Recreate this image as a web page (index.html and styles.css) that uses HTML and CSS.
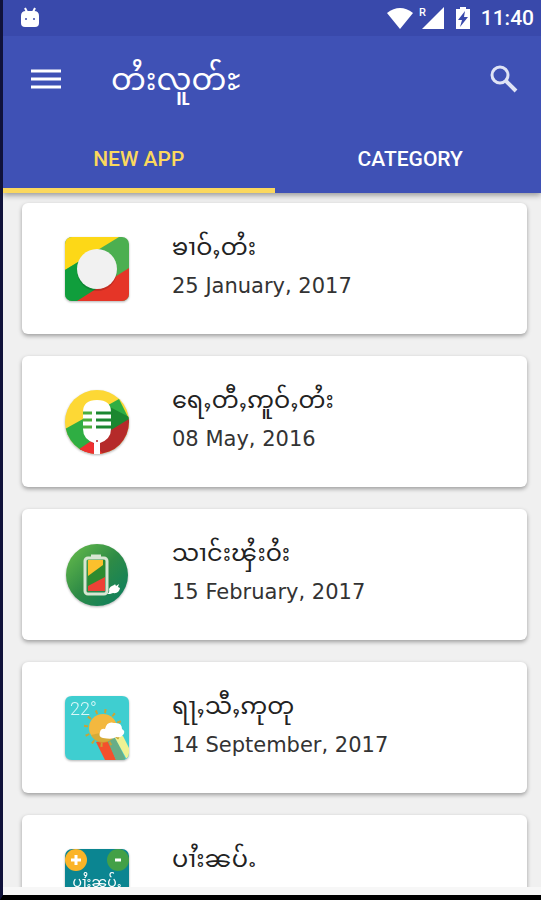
FILE: index.html
```html
<!DOCTYPE html>
<html lang="shn">
<head>
  <meta charset="UTF-8" />
  <meta name="viewport" content="width=device-width, initial-scale=1.0" />
  <title>တႆးလူတ်ႊ</title>
  <link rel="stylesheet" href="styles.css">
</head>
<body>

<header>
  <div class="status-bar">
    <svg class="robot" width="20" height="22" viewBox="0 0 20 22">
      <path d="M5 1l2 4M15 1l-2 4" stroke="#fff" stroke-width="2"/>
      <path d="M1 9q0-5 5-5h8q5 0 5 5v7q0 4-4 4H5q-4 0-4-4z" fill="#fff"/>
      <circle cx="6" cy="12" r="1" fill="#3949ab"/>
      <circle cx="14" cy="12" r="1" fill="#3949ab"/>
    </svg>
    <div class="status-icons">
      <svg width="28" height="22" viewBox="0 0 28 22">
        <path d="M1 6Q14-4 27 6L14 22z" fill="#fff"/>
      </svg>
      <svg width="26" height="22" viewBox="0 0 26 22">
        <text x="0" y="9" class="roaming">R</text>
        <path d="M25 0v22H3z" fill="#fff"/>
      </svg>
      <svg class="battery" width="16" height="22" viewBox="0 0 16 22">
        <path d="M1 2h4V0h6v2h4v20H1z" fill="#fff"/>
        <path d="M10 4L3 13h4l-2 7 8-10H9z" fill="#3949ab"/>
      </svg>
      <span class="clock">11:40</span>
    </div>
  </div>

  <div class="toolbar">
    <button aria-label="Menu">
      <svg width="30" height="22" viewBox="0 0 30 22">
        <path d="M0 3h30M0 11h30M0 19h30" stroke="#fff" stroke-width="3"/>
      </svg>
    </button>
    <h1>တႆးလူတ်ႊ</h1>
    <button aria-label="Search">
      <svg width="28" height="28" viewBox="0 0 28 28" fill="none" stroke="#dfe3f5">
        <circle cx="10" cy="10" r="8" stroke-width="3"/>
        <path d="M16 16l10 10" stroke-width="4"/>
      </svg>
    </button>
  </div>

  <nav class="tabs">
    <button class="tab active">NEW APP</button>
    <button class="tab">CATEGORY</button>
  </nav>
</header>

<main>
  <article class="card">
    <svg class="icon" viewBox="0 0 64 64">
      <clipPath id="square"><rect width="64" height="64" rx="7"/></clipPath>
      <g clip-path="url(#square)">
        <path d="M0 0h64v64H0z" fill="#4caf50"/>
        <path d="M0 0h54L0 33z" fill="#fdd817"/>
        <path d="M0 33L28 16l8 36-22 12H0z" fill="#109e3c"/>
        <path d="M12 64L64 31v33z" fill="#e53527"/>
      </g>
      <circle cx="32" cy="34" r="20" fill="#000" opacity=".15"/>
      <circle cx="32" cy="32" r="20" fill="#f1f1f1"/>
    </svg>
    <div class="info">
      <h2>ၶၢဝ်ႇတႆး</h2>
      <time datetime="2017-01-25">25 January, 2017</time>
    </div>
  </article>

  <article class="card">
    <svg class="icon" viewBox="0 0 64 64">
      <clipPath id="round"><circle cx="32" cy="32" r="32"/></clipPath>
      <g clip-path="url(#round)">
        <path d="M0 0h64v64H0z" fill="#fdd835"/>
        <path d="M0 39L54 9l10 20L14 62 0 64z" fill="#2fae43"/>
        <path d="M43 16L64 27v5L38 47z" fill="#1b8730"/>
        <path d="M10 62L64 29v35H10z" fill="#b52a2a"/>
        <path d="M10 62l16-11 12 13H10z" fill="#ee3030"/>
      </g>
      <path d="M18 22q0-12 14-12t14 12v17q0 10-11 14v11h-6V53q-11-4-11-14z" fill="#fff"/>
      <path d="M18 23h9M18 30h9M18 37h9" stroke="#4cae3c" stroke-width="3"/>
      <path d="M31 23h15M31 30h15M31 37h15" stroke="#1b8730" stroke-width="3"/>
      <circle cx="32" cy="51" r="1" fill="#b52a2a"/>
    </svg>
    <div class="info">
      <h2>ရေႇတီႇဢူဝ်ႇတႆး</h2>
      <time datetime="2016-05-08">08 May, 2016</time>
    </div>
  </article>

  <article class="card">
    <svg class="icon" viewBox="0 0 64 64">
      <linearGradient id="leaf" x1="0" y1="0" x2="1" y2="1">
        <stop offset="0" stop-color="#6abf4b"/>
        <stop offset=".5" stop-color="#2e8b46"/>
        <stop offset="1" stop-color="#087d62"/>
      </linearGradient>
      <circle cx="32" cy="32" r="31" fill="url(#leaf)"/>
      <path d="M23 17h17v31H23z" fill="#2e8b2f"/>
      <path d="M23 17h15v5L23 33z" fill="#fbc02d"/>
      <path d="M23 43l17-9v14H23z" fill="#ee4136"/>
      <rect x="20" y="15" width="22" height="36" rx="3" fill="none" stroke="#d7e6d2" stroke-width="3"/>
      <path d="M26 13h10" stroke="#d7e6d2" stroke-width="3"/>
      <path d="M42 51q3-1 2-5c2-4 5-3 6-5l1 2 3-2-1 3 2 1q-1 6-7 5l-3 1" fill="#fff"/>
    </svg>
    <div class="info">
      <h2>သၢင်းၾႆးဝႆး</h2>
      <time datetime="2017-02-15">15 February, 2017</time>
    </div>
  </article>

  <article class="card">
    <svg class="icon" viewBox="0 0 64 64">
      <path d="M7 0h50q7 0 7 7v50q0 7-7 7H7q-7 0-7-7V7q0-7 7-7z" fill="#3fced0"/>
      <g clip-path="url(#square)">
        <path d="M31 46l12-2 8 20H40z" fill="#f4512c"/>
        <path d="M42 44l8-3 10 21v2h-9z" fill="#68ad87"/>
        <path d="M49 40h9l7 14v8h-4z" fill="#f0f293"/>
      </g>
      <circle cx="38" cy="32" r="17" fill="none" stroke="#c9a534" stroke-width="4" stroke-dasharray="2 7"/>
      <circle cx="38" cy="32" r="14" fill="#f3b83f"/>
      <path d="M26 39l9-2 17-2q-5 13-16 12-7-2-10-8z" fill="#c9a534" opacity=".7"/>
      <path d="M38 42q-5-1-3-6 1-4 5-3 2-8 9-6 8-1 8 6 4 2 1 6-2 3-7 2-3 3-13 1z" fill="#fff"/>
      <text x="5" y="19" class="degrees">22°</text>
    </svg>
    <div class="info">
      <h2>ရႃႇသီႇဢုတု</h2>
      <time datetime="2017-09-14">14 September, 2017</time>
    </div>
  </article>

  <article class="card">
    <svg class="icon" viewBox="0 0 64 64">
      <rect width="64" height="64" rx="7" fill="#0b8591"/>
      <circle cx="11" cy="11" r="11" fill="#fbb427"/>
      <circle cx="53" cy="11" r="11" fill="#43a047"/>
      <path d="M6 11h10M11 6v10M50 11h6" stroke="#fff" stroke-width="3"/>
      <text x="32" y="38" class="icon-label">ပၢႆးၼပ်ႉ</text>
    </svg>
    <div class="info">
      <h2>ပၢႆးၼပ်ႉ</h2>
    </div>
  </article>
</main>

</body>
</html>
```

FILE: styles.css
```css
* {
  box-sizing: border-box;
}
body {
  margin: 0;
  height: 100vh;
  overflow: hidden;
  display: flex;
  flex-direction: column;
  background: #f7f7f7;
  border-left: 3px solid #10123a;
  border-bottom: 5px solid #000;
  color: #333;
  font-family: "DejaVu Sans", "Noto Sans Myanmar", "Padauk", sans-serif;
}
h1, h2 {
  margin: 0;
  font-weight: 400;
}
button {
  padding: 0;
  border: none;
  background: none;
  color: inherit;
  cursor: pointer;
}
svg {
  display: block;
}

/* Header */
header {
  position: relative;
  background: #3f51b5;
  color: #fff;
  box-shadow: 0 2px 6px rgba(0,0,0,0.4);
}
.status-bar {
  display: flex;
  align-items: center;
  justify-content: space-between;
  height: 36px;
  padding: 0 7px 0 17px;
  background: #3949ab;
}
.status-icons {
  display: flex;
  align-items: center;
  gap: 5px;
}
.roaming {
  font: 500 11px Roboto, sans-serif;
  fill: #fff;
}
.battery {
  margin: 0 5px;
}
.clock {
  font: 500 21px Roboto, sans-serif;
}
.toolbar {
  display: flex;
  align-items: center;
  height: 86px;
  padding: 0 23px 0 28px;
}
.toolbar h1 {
  flex: 1;
  margin-left: 50px;
  font-size: 31px;
  line-height: 50px;
}
.tabs {
  display: flex;
  margin-right: -5px;
}
.tab {
  flex: 1;
  height: 71px;
  padding-top: 7px;
  border-bottom: 5px solid transparent;
  font: 500 21px Roboto, sans-serif;
}
.tab.active {
  color: #fbd85d;
  border-color: #fbd85d;
}

/* App list */
main {
  flex: 1;
  min-height: 0;
  overflow: hidden;
  margin-bottom: 8px;
  padding: 10px 14px 0 19px;
  background: #f0f0f0;
}
.card {
  display: flex;
  align-items: flex-start;
  gap: 43px;
  min-height: 131px;
  margin-bottom: 22px;
  padding: 20px 43px;
  background: #fff;
  border-radius: 6px;
  box-shadow: 0 2px 4px rgba(0,0,0,0.35);
}
.icon {
  width: 64px;
  height: 64px;
  flex: none;
  margin-top: 14px;
  filter: drop-shadow(0 1px 1px rgba(0,0,0,0.3));
}
.card h2 {
  color: #222;
  font-size: 24px;
  line-height: 48px;
}
.card time {
  display: block;
  font-size: 21px;
  line-height: 30px;
}
.degrees {
  font: 300 18px Roboto, sans-serif;
  fill: #d9f7f7;
}
.icon-label {
  font-size: 14px;
  fill: #fff;
  text-anchor: middle;
}
```
